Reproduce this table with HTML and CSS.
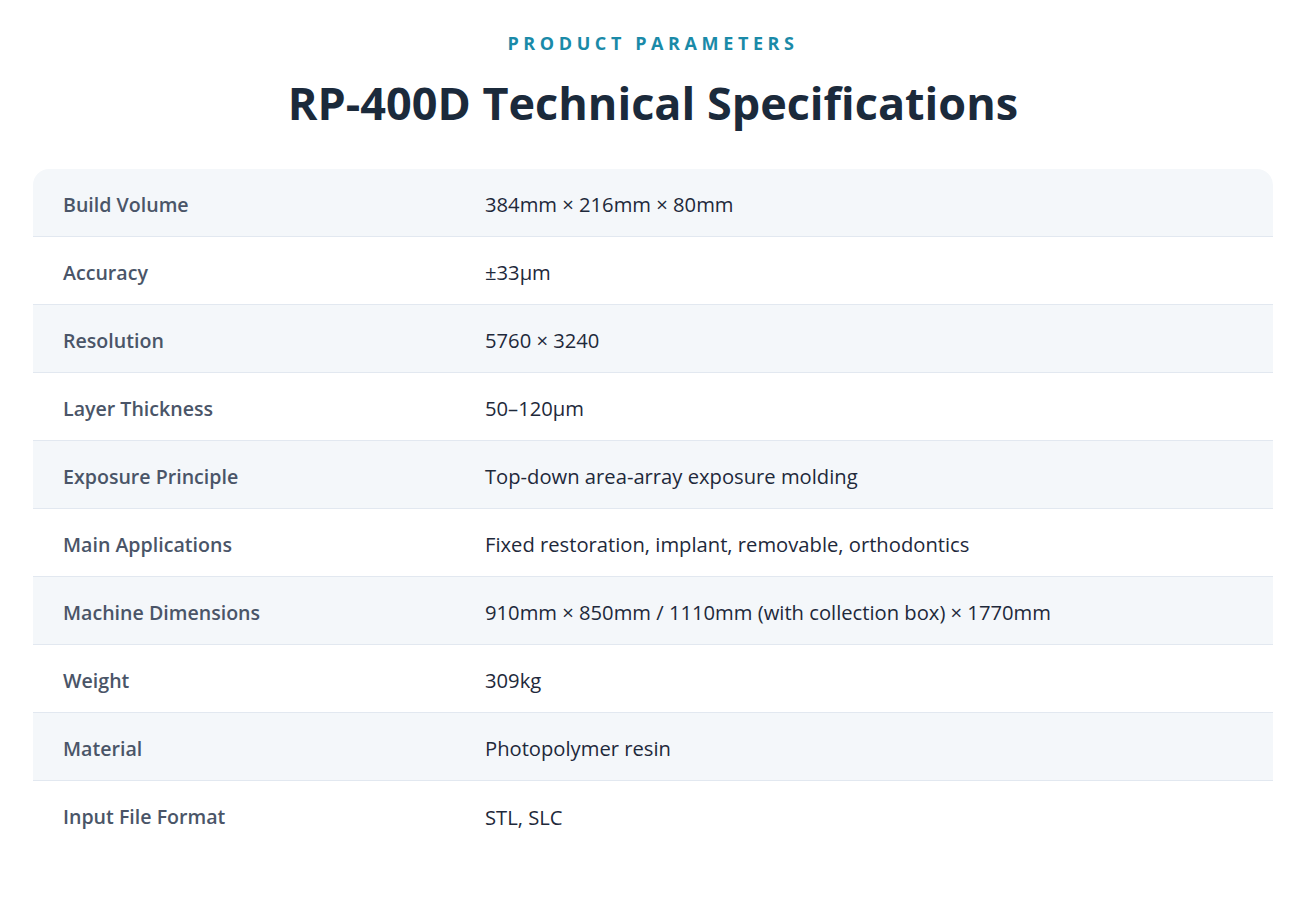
FILE: index.html
```html
<!DOCTYPE html>
<html lang="en">
<head>
<meta charset="utf-8">
<title>RP-400D Technical Specifications</title>
<link rel="stylesheet" href="styles.css">
</head>
<body>
<section class="specs">
  <p class="eyebrow">Product Parameters</p>
  <h1 class="title">RP-400D Technical Specifications</h1>
  <div class="table">
    <div class="row"><div class="label">Build Volume</div><div class="value">384mm × 216mm × 80mm</div></div>
    <div class="row"><div class="label">Accuracy</div><div class="value">±33μm</div></div>
    <div class="row"><div class="label">Resolution</div><div class="value">5760 × 3240</div></div>
    <div class="row"><div class="label">Layer Thickness</div><div class="value">50–120μm</div></div>
    <div class="row"><div class="label">Exposure Principle</div><div class="value">Top-down area-array exposure molding</div></div>
    <div class="row"><div class="label">Main Applications</div><div class="value">Fixed restoration, implant, removable, orthodontics</div></div>
    <div class="row"><div class="label">Machine Dimensions</div><div class="value">910mm × 850mm / 1110mm (with collection box) × 1770mm</div></div>
    <div class="row"><div class="label">Weight</div><div class="value">309kg</div></div>
    <div class="row"><div class="label">Material</div><div class="value">Photopolymer resin</div></div>
    <div class="row"><div class="label">Input File Format</div><div class="value">STL, SLC</div></div>
  </div>
</section>
</body>
</html>
```

FILE: styles.css
```css
* { box-sizing: border-box; }
html, body { margin: 0; padding: 0; background: #ffffff; }
body {
  font-family: "Open Sans", "Noto Sans", "Liberation Sans", sans-serif;
  color: #1e293b;
}
.specs {
  padding: 30px 34px 40px 33px;
  display: flex;
  flex-direction: column;
  align-items: stretch;
}
.eyebrow {
  margin: 0;
  text-align: center;
  text-transform: uppercase;
  font-size: 18px;
  font-weight: 700;
  letter-spacing: 4.6px;
  color: #1a8aa8;
  line-height: 26px;
}
.title {
  margin: 19px 0 0;
  text-align: center;
  font-size: 45px;
  font-weight: 700;
  line-height: 56px;
  color: #1b2a3b;
}
.table {
  margin-top: 38px;
  border-radius: 16px;
  overflow: hidden;
  display: flex;
  flex-direction: column;
}
.row {
  display: grid;
  grid-template-columns: 422px 1fr;
  height: 68px;
  align-items: center;
  padding-top: 3px;
  border-bottom: 1px solid #e2e8f0;
}
.row:nth-child(odd) { background: #f4f7fa; }
.row:last-child { border-bottom: none; }
.label {
  padding: 0 30px;
  font-size: 19.6px;
  font-weight: 600;
  color: #4a5568;
}
.value {
  padding: 0 30px;
  font-size: 20.2px;
  color: #1e293b;
}
```
